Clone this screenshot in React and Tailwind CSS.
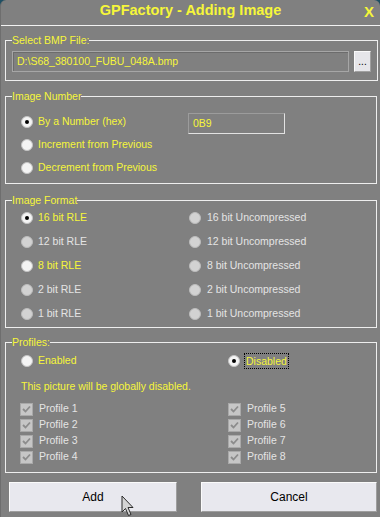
import React from 'react';

/* ---------- small win32 style controls ---------- */
function Radio({ checked, dim }) {
  return (
    <span
      className={`w-[12px] h-[12px] rounded-full border flex items-center justify-center shrink-0 ${
        dim ? 'bg-[#d2d2d2] border-[#bcbcbc]' : 'bg-[#f4f4f4] border-[#c4c4c4]'
      }`}
    >
      {checked && <span className="w-[4px] h-[4px] rounded-full bg-black" />}
    </span>
  );
}

function Check() {
  return (
    <span className="w-[13px] h-[13px] bg-[#c6c6c6] border border-[#a9a9a9] flex items-center justify-center shrink-0">
      <svg width="9" height="9" viewBox="0 0 9 9">
        <path d="M1 4 L3.5 6.5 L8 1.5" fill="none" stroke="#8c8c8c" strokeWidth="1.8" />
      </svg>
    </span>
  );
}

function Legend({ children }) {
  return (
    <legend className="text-[10.5px] leading-[12px] text-[#f6f63a]">{children}</legend>
  );
}

const formats = [
  ['16 bit RLE', true, true, '16 bit Uncompressed'],
  ['12 bit RLE', false, false, '12 bit Uncompressed'],
  ['8 bit RLE', true, false, '8 bit Uncompressed'],
  ['2 bit RLE', false, false, '2 bit Uncompressed'],
  ['1 bit RLE', false, false, '1 bit Uncompressed'],
];

export default function App() {
  return (
    <div className="w-[380px] h-[517px] bg-[#1f4f63] font-['Liberation_Sans',Arial,sans-serif]">
      <div className="relative w-[380px] h-[517px] bg-[#808080] rounded-t-[6px] border-l border-[#6e6e6e]">
        {/* title bar */}
        <div className="h-[26px] border-b border-[#f2f2f2] flex justify-center pt-[2px]">
          <span className="text-[14.5px] leading-[16px] font-bold text-[#f6f63a]">
            GPFactory - Adding Image
          </span>
          <span className="absolute right-[6px] top-[4px] text-[15px] leading-[16px] font-bold text-[#f6f63a]">
            X
          </span>
        </div>

        {/* select bmp */}
        <fieldset className="mt-[8px] ml-[4px] w-[372px] border border-[#eeeeee] px-[6px] pt-[5px] pb-[8px]">
          <Legend>Select BMP File:</Legend>
          <div className="flex items-center">
            <div className="w-[337px] h-[21px] border border-[#a6a6a6] shadow-[inset_1px_1px_0_#6c6c6c] flex items-center pl-[4px] text-[10.5px] text-[#f6f63a]">
              D:\S68_380100_FUBU_048A.bmp
            </div>
            <div className="ml-[5px] w-[17px] h-[21px] bg-[#e6e6ea] border border-t-[#fafafa] border-l-[#fafafa] border-r-[#a0a0a0] border-b-[#a0a0a0] flex items-center justify-center text-[10px] text-black leading-none">
              ...
            </div>
          </div>
        </fieldset>

        {/* image number */}
        <fieldset className="mt-[9px] ml-[4px] w-[372px] border border-[#eeeeee] px-[6px] pt-[8px] pb-[4px]">
          <Legend>Image Number</Legend>
          <div className="pl-[9px] text-[10.5px] text-[#f6f63a]">
            <div className="h-[23px] grid grid-cols-[162px_auto] items-center">
              <div className="flex items-center gap-[5px]">
                <Radio checked />
                <span>By a Number (hex)</span>
              </div>
              <div className="ml-[5px] w-[97px] h-[21px] mt-[3px] border border-t-[#9c9c9c] border-l-[#9c9c9c] border-r-[#e2e2e2] border-b-[#e2e2e2] flex items-center pl-[4px]">
                0B9
              </div>
            </div>
            <div className="h-[23px] flex items-center gap-[5px]">
              <Radio />
              <span>Increment from Previous</span>
            </div>
            <div className="h-[23px] flex items-center gap-[5px]">
              <Radio />
              <span>Decrement from Previous</span>
            </div>
          </div>
        </fieldset>

        {/* image format */}
        <fieldset className="mt-[10px] ml-[4px] w-[372px] border border-[#eeeeee] px-[6px] pt-0 pb-[1px]">
          <Legend>Image Format</Legend>
          <div className="pl-[9px] text-[10.5px]">
            {formats.map(([l, on, sel, r]) => (
              <div key={l} className="h-[24px] grid grid-cols-[168px_1fr] items-center">
                <div className="flex items-center gap-[5px]">
                  <Radio checked={sel} dim={!on} />
                  <span className={on ? 'text-[#f6f63a]' : 'text-[#e4e4e4]'}>{l}</span>
                </div>
                <div className="flex items-center gap-[6px]">
                  <Radio dim />
                  <span className="text-[#e4e4e4]">{r}</span>
                </div>
              </div>
            ))}
          </div>
        </fieldset>

        {/* profiles */}
        <fieldset className="mt-[8px] ml-[4px] w-[372px] border border-[#eeeeee] px-[6px] pt-[2px] pb-[7px]">
          <Legend>Profiles:</Legend>
          <div className="pl-[8px] text-[10.5px]">
            <div className="h-[22px] grid grid-cols-[208px_1fr] items-center text-[#f6f63a]">
              <div className="flex items-center gap-[5px] ml-[1px]">
                <Radio />
                <span>Enabled</span>
              </div>
              <div className="flex items-center gap-[4px]">
                <Radio checked />
                <span className="border border-dotted border-black px-[1px] leading-[14px]">Disabled</span>
              </div>
            </div>
            <div className="mt-[7px] ml-[1px] leading-[14px] text-[#f6f63a]">
              This picture will be globally disabled.
            </div>
            <div className="mt-[8px] grid grid-cols-[208px_1fr] text-[#e4e4e4]">
              {[1, 5, 2, 6, 3, 7, 4, 8].map((n) => (
                <div key={n} className="h-[16px] flex items-center gap-[6px]">
                  <Check />
                  <span>Profile {n}</span>
                </div>
              ))}
            </div>
          </div>
        </fieldset>

        {/* buttons */}
        <div className="mt-[9px] flex text-[12px] text-black">
          <div className="ml-[8px] w-[168px] h-[30px] bg-[#e8e8ee] border border-t-[#fbfbfb] border-l-[#fbfbfb] border-r-[#9e9e9e] border-b-[#9e9e9e] flex items-center justify-center">
            Add
          </div>
          <div className="ml-[24px] w-[176px] h-[30px] bg-[#e8e8ee] border border-t-[#fbfbfb] border-l-[#fbfbfb] border-r-[#9e9e9e] border-b-[#9e9e9e] flex items-center justify-center">
            Cancel
          </div>
        </div>

        {/* mouse pointer */}
        <svg className="absolute left-[120px] top-[495px]" width="14" height="22" viewBox="0 0 14 22">
          <path d="M1 1 L1 17 L4.5 13.5 L7.5 20.5 L10 19.5 L7 12.5 L12 12.5 Z" fill="#d4d4d4" stroke="#2a2a2a" strokeWidth="1" />
        </svg>
      </div>
    </div>
  );
}
